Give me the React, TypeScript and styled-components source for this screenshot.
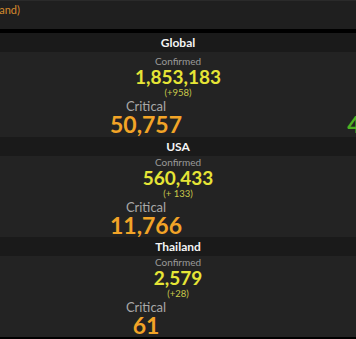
import React from 'react';
import styled, { createGlobalStyle } from 'styled-components';

const GlobalStyle = createGlobalStyle`
    html, body {
        margin: 0;
        padding: 0;
        background: #000;
    }
    body {
        font-family: Lato, 'Open Sans', sans-serif;
    }
`;

type Region = {
    name: string;
    confirmed: string;
    delta: string;
    critical: string;
    recovered: string;
    roomy?: boolean;
};

const regions: Region[] = [
    { name: 'Global', confirmed: '1,853,183', delta: '(+958)', critical: '50,757', recovered: '423,391', roomy: true },
    { name: 'USA', confirmed: '560,433', delta: '(+ 133)', critical: '11,766', recovered: '8,878' },
    { name: 'Thailand', confirmed: '2,579', delta: '(+28)', critical: '61', recovered: '1,288' },
];

const App = () => {
    return (
        <>
            <GlobalStyle />
            <Page>
                <TopPanel>
                    <Note>(Thailand)</Note>
                </TopPanel>
                <Divider />
                {regions.map((r) => (
                    <Section key={r.name}>
                        <SectionHeader>{r.name}</SectionHeader>
                        <Body $roomy={r.roomy}>
                            <Label>Confirmed</Label>
                            <Confirmed>{r.confirmed}</Confirmed>
                            <Delta>{r.delta}</Delta>
                            <StatRow>
                                <Stat>
                                    <StatLabel>Critical</StatLabel>
                                    <StatValue $color="#f2a427">{r.critical}</StatValue>
                                </Stat>
                                <Stat>
                                    <StatLabel>Recovered</StatLabel>
                                    <StatValue $color="#4fb123">{r.recovered}</StatValue>
                                </Stat>
                            </StatRow>
                        </Body>
                    </Section>
                ))}
            </Page>
        </>
    );
};

const Page = styled.div`
    width: 356px;
    height: 339px;
    overflow: hidden;
    background: #000;
`;

const TopPanel = styled.div`
    height: 29px;
    background: #1f1f1f;
    overflow: hidden;
    border-top: 1px solid #2a2a2a;
    box-sizing: border-box;
`;

const Note = styled.div`
    margin-left: -27px;
    margin-top: 2px;
    font-size: 11px;
    line-height: 14px;
    color: #d68a2e;
    white-space: nowrap;
`;

const Divider = styled.div`
    height: 4px;
    background: #000;
`;

const Section = styled.div`
    background: #232323;
`;

const SectionHeader = styled.div`
    height: 19px;
    background: #1a1a1a;
    color: #f4f4f4;
    font-size: 12px;
    font-weight: 700;
    line-height: 20px;
    text-align: center;
`;

const Body = styled.div<{ $roomy?: boolean }>`
    display: flex;
    flex-direction: column;
    align-items: center;
    padding: ${(p) => (p.$roomy ? '3px 0 1px' : '0')};
    overflow: hidden;
`;

const Label = styled.div`
    font-size: 10px;
    line-height: 12px;
    color: #9a9a9a;
`;

const Confirmed = styled.div`
    font-size: 19px;
    font-weight: 700;
    line-height: 20px;
    color: #e6e536;
`;

const Delta = styled.div`
    font-size: 9.5px;
    line-height: 12px;
    color: #c9c84a;
`;

const StatRow = styled.div`
    align-self: stretch;
    display: flex;
    padding-left: 24px;
`;

const Stat = styled.div`
    flex: 0 0 244px;
    display: flex;
    flex-direction: column;
    align-items: center;
`;

const StatLabel = styled.div`
    font-size: 13px;
    line-height: 14px;
    color: #a8a8a8;
`;

const StatValue = styled.div<{ $color: string }>`
    font-size: 23px;
    font-weight: 700;
    line-height: 23px;
    color: ${(p) => p.$color};
`;

export default App;
